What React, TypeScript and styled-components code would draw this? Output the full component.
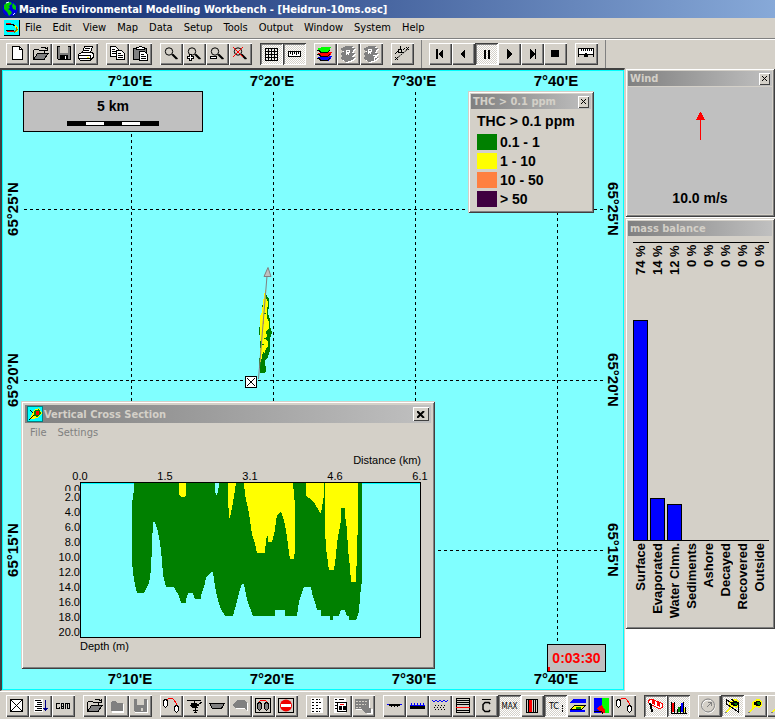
import React from "react";
import styled, { createGlobalStyle, css } from "styled-components";

const face = "#d4d0c8";
const dark = "#404040";
const mid = "#808080";
const sea = "#80ffff";
const uiFont = '"DejaVu Sans Condensed", "DejaVu Sans", sans-serif';
const plainFont = '"Liberation Sans", Arial, sans-serif';

const GlobalStyle = createGlobalStyle`
  * { box-sizing: border-box; }
  body { margin: 0; background: #fff; font-family: ${uiFont}; font-size: 11px; color: #000; }
  button { font: inherit; color: inherit; }
`;

const raised = css`
  box-shadow: inset 1px 1px 0 ${face}, inset -1px -1px 0 ${dark}, inset 2px 2px 0 #fff, inset -2px -2px 0 ${mid};
`;

const Shell = styled.div`
  display: flex;
  flex-direction: column;
  min-height: 100vh;
  overflow: hidden;
`;

const TitleBar = styled.header`
  display: flex;
  align-items: center;
  gap: 1px;
  height: 18px;
  padding-left: 2px;
  background: linear-gradient(to right, #0a246a, #87a9d8);
  color: #fff;
  font-weight: bold;
  white-space: nowrap;
`;

const MenuBar = styled.nav`
  display: flex;
  align-items: center;
  height: 21px;
  padding-left: 4px;
  background: ${face};
  border-bottom: 1px solid ${mid};
`;

const MenuItem = styled.button`
  border: 0;
  padding: 0 6px 0 5px;
  background: none;
  line-height: 16px;
`;

const ToolStrip = styled.div<{ $bottom?: boolean }>`
  display: flex;
  align-items: flex-start;
  flex: none;
  gap: 8px;
  height: ${(p) => (p.$bottom ? 28 : 29)}px;
  padding: 3px 0 0 6px;
  overflow: hidden;
  background: ${face};
  border-top: 1px solid #fff;
`;

const Group = styled.div`
  display: flex;
  flex: none;
`;

const Divider = styled.div`
  width: 1px;
  height: 29px;
  margin: -3px -1px 0;
  flex: none;
  background: ${mid};
`;

const ToolButton = styled.button<{ $on?: boolean }>`
  display: block;
  width: 23px;
  height: 22px;
  padding: 0;
  border: 0;
  flex: none;
  background: ${face};
  box-shadow: inset 1px 1px 0 #fff, inset -1px -1px 0 ${dark}, inset -2px -2px 0 ${mid};
  ${(p) =>
    p.$on &&
    css`
      background: repeating-conic-gradient(#fff 0 25%, ${face} 0 50%) 0 0 / 2px 2px;
      box-shadow: inset 1px 1px 0 ${dark}, inset -1px -1px 0 #fff, inset 2px 2px 0 ${mid};
    `}
`;

const Glyph = styled.svg.attrs({ width: 23, height: 22, viewBox: "0 0 23 22", shapeRendering: "crispEdges" })`
  display: block;
  fill: none;
  stroke: #000;
`;

const Workspace = styled.main`
  display: flex;
  flex: 1;
`;

const MapPane = styled.section`
  position: relative;
  flex: 1;
  min-width: 0;
  overflow: hidden;
  background: ${sea};
  border: solid ${face};
  border-width: 2px 1px 1px 2px;
  border-top-color: ${dark};
  border-left-color: ${dark};
  box-shadow: inset 0 0 0 1px #00ffff;
`;

const MapDrawing = styled.svg`
  display: block;
  font: bold 15px ${plainFont};
`;

const SidePane = styled.aside`
  width: 150px;
  flex: none;
  background: #fff;
`;

const Panel = styled.section`
  padding: 3px;
  background: ${face};
  ${raised}
`;

const Caption = styled.header<{ $tall?: boolean }>`
  display: flex;
  align-items: center;
  justify-content: space-between;
  height: ${(p) => (p.$tall ? 18 : 15)}px;
  padding: 0 2px;
  background: linear-gradient(to right, ${mid}, #c0c0c0);
  color: ${face};
  font-weight: bold;
  white-space: nowrap;
`;

const CaptionTitle = styled.span`
  display: flex;
  align-items: center;
  gap: 1px;
`;

const CloseButton = styled.button<{ $big?: boolean }>`
  display: flex;
  align-items: center;
  justify-content: center;
  width: ${(p) => (p.$big ? 16 : 11)}px;
  height: ${(p) => (p.$big ? 14 : 12)}px;
  padding: 0;
  border: 0;
  background: ${face};
  box-shadow: inset 1px 1px 0 #fff, inset -1px -1px 0 ${dark};
`;

const ScaleBox = styled.div`
  position: absolute;
  left: 21px;
  top: 21px;
  width: 180px;
  height: 41px;
  padding-top: 6px;
  border: 1px solid #000;
  background: #c0c0c0;
  font: bold 14px/16px ${plainFont};
  text-align: center;
`;

const ScaleBar = styled.div`
  display: flex;
  width: 92px;
  height: 5px;
  margin: 7px auto 0;
  border: 1px solid #000;
`;

const ScalePart = styled.span<{ $white?: boolean }>`
  flex: 1;
  background: ${(p) => (p.$white ? "#fff" : "#000")};
`;

const LegendWindow = styled(Panel)`
  position: absolute;
  right: 30px;
  top: 21px;
  width: 126px;
  padding-bottom: 5px;
`;

const LegendBody = styled.div`
  padding: 4px 6px 0;
  font: bold 14px/16px ${plainFont};
`;

const LegendTitle = styled.div`
  margin-bottom: 3px;
`;

const LegendRow = styled.div`
  display: flex;
  align-items: center;
  gap: 3px;
  height: 19px;
`;

const Swatch = styled.span<{ $color: string }>`
  width: 20px;
  height: 16px;
  background: ${(p) => p.$color};
`;

const Clock = styled.div`
  position: absolute;
  right: 18px;
  bottom: 18px;
  width: 59px;
  height: 28px;
  border: 1px solid #000;
  background: linear-gradient(#f00, #f00) left bottom / 2px 4px no-repeat #c0c0c0;
  color: #f00;
  font: bold 14px/26px ${plainFont};
  text-align: center;
`;

const SectionWindow = styled(Panel)`
  position: absolute;
  left: 19px;
  bottom: 21px;
  width: 414px;
  padding: 4px 4px 11px;
`;

const SectionMenu = styled.div`
  display: flex;
  height: 20px;
  color: ${mid};
`;

const SectionChart = styled.svg`
  display: block;
  font: 11px ${plainFont};
`;

const WindBody = styled.div`
  display: flex;
  flex-direction: column;
  align-items: center;
  justify-content: space-between;
  height: 127px;
  margin-top: 1px;
  padding: 25px 0 8px;
  background: #c0c0c0;
  font: bold 14px/16px ${plainFont};
`;

const MassPanel = styled(Panel)`
  margin-top: 1px;
  min-height: 411px;
`;

const MassChart = styled.div`
  display: grid;
  grid-template-columns: repeat(8, 17px);
  margin: 6px 0 0 5px;
  width: 135px;
  font: bold 13px/15px ${plainFont};
`;

const MassColumn = styled.div`
  display: flex;
  flex-direction: column;
`;

const MassPlot = styled.div`
  display: flex;
  flex-direction: column;
  justify-content: space-between;
  height: 299px;
  border-top: 1px solid #000;
  border-bottom: 1px solid #000;
`;

const Upright = styled.span`
  width: 15px;
  padding-bottom: 2px;
  writing-mode: vertical-rl;
  transform: rotate(180deg);
  white-space: nowrap;
  text-align: right;
`;

const UprightValue = styled(Upright)`
  height: 32px;
`;

const MassBar = styled.div`
  width: 15px;
  background: #00f;
  border: 1px solid #000;
  border-bottom: 0;
`;

type IconName = string;

const folderOpen = (
  <>
    <path d="M4.5 16.5v-9l1-1h4l1 1h5v3" fill={face} />
    <path d="M4.5 16.5l4-6h10.5l-4 6z" fill={mid} />
    <path d="M11.5 5.5l1-1.5h3l2 2M18.5 3.5v3.5h-3.5" />
  </>
);
const capsules = (
  <>
    <path d="M3.5 5.5l2-1 2 1v5l-2 2-2-2zM14.5 11.5l2-1 2 1v4l-2 2-2-2z" fill="#fff" />
    <path d="M7 5l2-2h3l2 2 2 3v2" stroke="#f00" />
  </>
);
const lens = (
  <>
    <circle cx="9" cy="8.5" r="3.7" shapeRendering="auto" />
    <path d="M12 11.5l4.5 4.5M13 11.5l4.5 4.5" strokeWidth="1.4" shapeRendering="auto" />
  </>
);
const sheets = (a: string, b: string, c: string) => (
  <g stroke="none">
    <path d="M3 15l5-3h9l-3 2h4l-3 3-6 2z" fill={c} />
    <path d="M3 11l5-3h9l-3 2h4l-3 3-6 2z" fill={b} />
    <path d="M3 6l6-3h7l-2 2h4l-4 4-5 1z" fill={a} />
  </g>
);
const plumeBlob = (
  <>
    <path d="M4 17l4-4v-6l2-1 2-2h3l3 2v5l-3 2-3-1-3 2-3 3z" fill="#ff0" stroke="none" />
    <path d="M10 7h2v-1h4v1h1v3h-1v1h-4v-1h-2z" fill="#000" stroke="none" />
    <path d="M13 7h3v3h-2v-1h-1z" fill="#008000" stroke="none" />
    <path d="M4 17.5h2" stroke={mid} />
  </>
);

const icons: Record<IconName, React.ReactNode> = {
  New: (
    <>
      <path d="M6.5 3.5h7l3 3v10h-10z" fill="#fff" />
      <path d="M13.5 3.5v3h3" />
    </>
  ),
  Open: folderOpen,
  Save: (
    <>
      <path d="M5.5 3.5h13v13h-12l-1-1z" fill={mid} />
      <path d="M8 3h8v7h-8z" fill={face} stroke="none" />
      <path d="M8 12h8v5h-8z" fill="#000" stroke="none" />
      <path d="M13.5 13v3" stroke="#fff" />
    </>
  ),
  Print: (
    <>
      <path d="M7.5 9.5l2-6h8l-2 6" fill="#fff" />
      <path d="M10 5.5h5M9 7.5h5" />
      <path d="M3.5 11.5l3-2h10l2 1v4l-3 3h-10l-2-2z" fill="#fff" />
      <path d="M4 12.5h12M4 15.5h11M15.5 13v4l3-3" />
      <path d="M11.5 14h2" stroke="#ff0" />
    </>
  ),
  Copy: (
    <>
      <path d="M4.5 3.5h5l3 3v7h-8z" fill="#fff" />
      <path d="M6 6.5h3M6 8.5h4M6 10.5h4" />
      <path d="M10.5 7.5h5l3 3v6h-8z" fill="#fff" />
      <path d="M12 10.5h3M12 12.5h5M12 14.5h5" />
    </>
  ),
  Paste: (
    <>
      <path d="M4.5 5.5h13v11h-13z" fill={mid} />
      <path d="M7.5 6.5v-2h2l1-1h2l1 1h2v2z" fill="#fff" />
      <path d="M10.5 8.5h5l3 3v6h-8z" fill="#fff" />
      <path d="M12 11.5h3M12 13.5h5M12 15.5h5" />
    </>
  ),
  Zoom: lens,
  "Zoom in": (
    <>
      {lens}
      <path d="M6.5 11.5h2v2h2v2h-2v2h-2v-2h-2v-2h2z" fill="#fff" />
    </>
  ),
  "Zoom out": (
    <>
      {lens}
      <path d="M4.5 13.5h6v2h-6z" fill="#fff" />
    </>
  ),
  "Zoom off": (
    <>
      {lens}
      <path d="M4 4l10 10M14 4l-10 10" stroke="#f00" />
    </>
  ),
  Grid: <path d="M5.5 5v13M8.5 5v13M11.5 5v13M14.5 5v13M17.5 5v13M5 5.5h13M5 8.5h13M5 11.5h13M5 14.5h13M5 17.5h13" />,
  Ruler: (
    <>
      <path d="M5.5 8.5h12v5h-12z" fill="#fff" />
      <path d="M7.5 9v2M9.5 9v3M11.5 9v2M13.5 9v3M15.5 9v2" />
    </>
  ),
  Layers: (
    <>
      <g stroke="none">
        <path d="M3 15l4-2h11l-2 2h2l-4 3h-7z" fill="#00f" />
        <path d="M3 11l4-2h11l-2 2h2l-4 3h-7z" fill="#f00" />
        <path d="M3 6l5-2h9l-2 2h2l-4 3h-6z" fill="#0f0" />
      </g>
      <path d="M3 7.5h2l2 2h6l3-2M3 11.5h2l2 2h6l3-2M3 15.5h2l2 2h6l3-2" />
    </>
  ),
  "Layers off": (
    <>
      <g transform="translate(1 1)">{sheets("#fff", "#fff", "#fff")}</g>
      {sheets(mid, mid, mid)}
      <path d="M9.5 7v5M10 7.5h2v2h-2l2 2" stroke="#fff" />
    </>
  ),
  "Layers query": (
    <>
      <g transform="translate(1 1)">{sheets("#fff", "#fff", "#fff")}</g>
      {sheets(mid, mid, mid)}
      <path d="M8.5 6v5M9 6.5h2v2h-2l2 2M13 12.5h3v2h-2v2" stroke="#fff" />
    </>
  ),
  Vector: (
    <>
      <path d="M5 16l12-10" strokeDasharray="2 1" shapeRendering="auto" />
      <path d="M4 11l3-3M7.5 6.5h3v3h-3zM9.5 3v3M10 9.500h3M12 7l2-2M4 14l3 3M7 14l-3 3M15 4l3 3M18 4l-3 3" />
    </>
  ),
  First: (
    <>
      <path d="M7 6h2v10h-2z" fill="#000" stroke="none" />
      <path d="M14 6v10l-5-5z" fill="#000" stroke="none" />
    </>
  ),
  Back: <path d="M13 6v10l-5-5z" fill="#000" stroke="none" />,
  Pause: <path d="M9 7h2v9h-2zM13 7h2v9h-2z" fill="#000" stroke="none" />,
  Play: <path d="M9 6v10l5-5z" fill="#000" stroke="none" />,
  Last: (
    <>
      <path d="M14 6h1v10h-1z" fill="#000" stroke="none" />
      <path d="M9 6v10l5-5z" fill="#000" stroke="none" />
    </>
  ),
  Stop: <path d="M7 7h8v7h-8z" fill="#000" stroke="none" />,
  Frame: (
    <>
      <path d="M4 6h14v5h-14z" fill="#fff" stroke="none" />
      <path d="M3.500 14v-8.500h15v8.500M4 11.500h14M6.500 6v2M8.500 6v2M10.500 6v2M12.500 6v2M14.500 6v2M16.500 6v2" />
      <path d="M10 10h2v1h1v3h-4v-3h1z" fill="#000" stroke="none" />
    </>
  ),
  Site: (
    <>
      <path d="M4.5 4.5h12v12h-12z" fill="#fff" />
      <path d="M5 5l11 11M16 5l-11 11" />
    </>
  ),
  List: (
    <>
      <path d="M5 4h9v13h-9z" fill="#fff" stroke="none" />
      <path d="M6 5.5h6M8 7.5h5M8 9.5h5M6 11.5h7M8 13.5h5M6 15.5h7" />
      <path d="M16.5 5v11M14 13.5h5M15 14.5h3" stroke="#008" />
    </>
  ),
  Goil: <path d="M8 8.500h-3l-1 1v3l1 1h2v-2M9.500 8.500h2v5h-2zM13.500 8v6M15.500 8v6M17.500 8v6M13 8.500h4M16 13.500h2M9 11.500h3" />,
  "Folder off": (
    <>
      <path d="M6 7h5l1 2h6v9h-12z" fill="#fff" stroke="none" />
      <path d="M5 8l1-2h4l1 2h6v8h-12z" fill={mid} stroke="none" />
    </>
  ),
  "Save off": (
    <>
      <path d="M6 5h13v13h-13z" fill="#fff" stroke="none" />
      <path d="M5 4h13v13h-12l-1-1z" fill={mid} stroke="none" />
      <path d="M8 4h7v6h-7zM12 13h2v3h-2z" fill={face} stroke="none" />
    </>
  ),
  Release: capsules,
  Helicopter: (
    <>
      <path d="M4 5.5h14M11.5 5v3M8 9h8l3-2M7 10.5h9M9 12.5h6M12 13v5M10 15.5h5M11 17.5h3" />
      <path d="M8 8h6v4h-6z" fill="#000" stroke="none" />
    </>
  ),
  Boom: <path d="M3.5 8.5h15l-3 5h-9z" fill={mid} />,
  Vessel: (
    <>
      <path d="M4 11l5-5h7l3 3v8l-3-3h-8z" fill="#fff" stroke="none" />
      <path d="M3 10l5-5h7l3 3v8l-3-3h-8z" fill={mid} stroke="none" />
    </>
  ),
  Responses: (
    <>
      <path d="M3.5 3.5h15v14h-15z" />
      <path d="M5.500 8.500l2-1 2 1v5l-2 2-2-2zM12.500 8.500l2-1 2 1v5l-2 2-2-2z" fill={mid} />
      <path d="M7 6.500l2-1h4l2 1" stroke="#f00" />
    </>
  ),
  "No entry": (
    <>
      <path d="M3.5 3.5h15v14h-15z" />
      <circle cx="11" cy="10.500" r="6" fill="#e00" stroke="none" shapeRendering="auto" />
      <path d="M6 9h10v3h-10z" fill="#fff" stroke="none" />
    </>
  ),
  Report: (
    <>
      <path d="M5 3h12v15h-12z" fill="#fff" stroke="none" />
      <path d="M6 4.5h2M6 7.500h2M6 10.500h2M6 13.500h2M6 16.500h2" />
      <path d="M10 4.500h4M10 7.500h5M10 10.500h3M10 13.500h5M10 16.500h4" strokeDasharray="2 1" />
    </>
  ),
  "Response report": (
    <>
      <path d="M5 3h12v15h-12z" fill="#fff" stroke="none" />
      <path d="M6 4.500h2M6 7.500h2M6 10.500h2M6 13.500h2M10 4.500h5" />
      <path d="M8.500 7.500h9v9h-9z" fill="#fff" />
      <path d="M10 11h3v4h-3zM14 11h3v4h-3z" fill="#000" stroke="none" />
      <path d="M11 9.500h4" stroke="#f00" />
    </>
  ),
  "Keyboard off": (
    <>
      <path d="M4 5h14v9h3v5h-6l-3-4h-8z" fill="#fff" stroke="none" />
      <path d="M3 4h14v9h2v5h-6l-3-4h-7z" fill={mid} stroke="none" />
      <path d="M4 6.500h12M4 9.500h10M4 12.500h5" stroke={face} strokeDasharray="2 1" />
    </>
  ),
  "Surface film": (
    <>
      <path d="M4 9.500h15" stroke="#00f" />
      <path d="M6 9h11v2h-2v1h-1v-1h-2v1h-1v-1h-2v1h-1v-1h-2z" fill="#000" stroke="none" />
    </>
  ),
  "Surface depth": (
    <>
      <path d="M4 10.500h15M5.500 8v2M8.500 8v2M11.500 8v2M14.500 8v2M17.500 8v2" stroke="#00f" />
      <path d="M4 11h15v3h-15z" fill="#000" stroke="none" />
    </>
  ),
  "Water column": (
    <>
      <path d="M3 5l2 2 2-2 2 2 2-2 2 2 2-2 2 2 2-2" stroke="#00f" />
      <path d="M6 10.500h12M5 12.500h12M6 14.500h12" strokeDasharray="1 2" />
    </>
  ),
  Profile: (
    <>
      <path d="M4.500 3.500h13v14h-13zM5 5.500h12M5 7.500h12M5 9.500h12M5 15.500h12" />
      <path d="M4 12.500h14" stroke="#f00" />
    </>
  ),
  "Mean concentration": (
    <>
      <path d="M7 4.500h9" />
      <path d="M15 9l-1-1.500h-4l-2 2v5l2 2h4l1-1.500" shapeRendering="auto" strokeWidth="1.500" />
    </>
  ),
  Maximum: (
    <text x="11.500" y="14" fontSize="8" textAnchor="middle" stroke="none" fill="#000">
      MAX
    </text>
  ),
  Bands: (
    <>
      <path d="M5.500 4.500h11v13h-11zM7.500 5v12M12.500 5v12M14.500 5v12" />
      <path d="M8 5h3v12h-3z" fill="#f00" stroke="none" />
    </>
  ),
  "Total concentration": (
    <>
      <text x="10" y="14" fontSize="9" textAnchor="middle" stroke="none" fill="#000">
        TC
      </text>
      <path d="M18.500 10v2M18.500 13v1M18.500 15v2" />
    </>
  ),
  "Layer view": (
    <>
      <path d="M3 8l3-4h13v4z" fill="#00f" stroke="none" />
      <path d="M3.500 14.500l4-4h11l-4 4z" fill="#ff0" />
      <path d="M3 17h15v-2h-15z" fill="#00f" stroke="none" />
      <path d="M9 12h4v1h-4" fill="#0a0" stroke="#080" />
    </>
  ),
  "Section view": (
    <>
      <path d="M4 3h15v15h-15z" fill="#00f" stroke="none" />
      <path d="M12 3h7v15h-4l-3-7z" fill="#0f0" stroke="none" />
      <path d="M7 13l5-3 3 5v3h-4z" fill="#f00" stroke="none" />
      <path d="M4 16h5l3 1v2" />
    </>
  ),
  Recovery: capsules,
  Wind: (
    <>
      <path d="M4.500 5.500l2-1h2l10 4v4l-3 1-9-4-2-2z" fill="#fff" stroke="#f00" />
      <path d="M8 5l3 1v4l-3-1zM13 7l3 1v4l-3-1z" fill="#f00" stroke="none" />
      <path d="M6 8l1 3 1 6" strokeWidth="2" />
    </>
  ),
  "Mass balance": (
    <>
      <path d="M4.500 7v11h15" />
      <path d="M5 8h2v9h-2z" fill="#f00" stroke="none" />
      <path d="M7.500 7v11M10.500 14v4M13.500 11v7M16.500 7v11M18.500 12v6" />
      <path d="M8 15h2v2h-2z" fill={face} stroke="none" />
      <path d="M11 12h2v5h-2z" fill="#080" stroke="none" />
      <path d="M14 8h2v9h-2z" fill="#00f" stroke="none" />
      <path d="M17 13h1v4h-1z" fill="#ff0" stroke="none" />
    </>
  ),
  "Direction off": (
    <>
      <circle cx="10.500" cy="11.500" r="6.500" stroke="#fff" shapeRendering="auto" />
      <circle cx="10" cy="10.500" r="6.500" stroke={mid} shapeRendering="auto" />
      <path d="M9 12l4-4M10 7.500h3v3" stroke={mid} />
    </>
  ),
  "Plume grid": (
    <>
      {plumeBlob}
      <path d="M5 4.500l5 3h8M5.500 5v4l12 8v-10M10 4l8 5" />
    </>
  ),
  Plume: plumeBlob,
  "Plume track": plumeBlob,
};

type Tool = [IconName, boolean?];
const topGroups: Tool[][] = [
  [["New"], ["Open"], ["Save"], ["Print"]],
  [["Copy"], ["Paste"]],
  [["Zoom"], ["Zoom in"], ["Zoom out"], ["Zoom off"]],
  [["Grid", true], ["Ruler", true]],
  [["Layers"], ["Layers off"], ["Layers query"]],
  [["Vector"]],
];
const playerGroups: Tool[][] = [
  [["First"], ["Back"], ["Pause", true], ["Play"], ["Last"], ["Stop"]],
  [["Frame"]],
];
const bottomGroups: Tool[][] = [
  [["Site"], ["List"], ["Goil"]],
  [["Open"], ["Folder off"], ["Save off"]],
  [["Release"], ["Helicopter"], ["Boom"], ["Vessel"], ["Responses"], ["No entry"]],
  [["Report"], ["Response report"], ["Keyboard off"]],
  [
    ["Surface film"],
    ["Surface depth"],
    ["Water column"],
    ["Profile"],
    ["Mean concentration"],
    ["Maximum", true],
    ["Bands"],
    ["Total concentration", true],
    ["Layer view"],
    ["Section view"],
    ["Recovery"],
  ],
  [["Wind", true], ["Mass balance", true]],
  [["Direction off"], ["Plume grid", true], ["Plume"], ["Plume track"]],
];

function Groups({ groups }: { groups: Tool[][] }) {
  return (
    <>
      {groups.map((tools, i) => (
        <Group key={i}>
          {tools.map(([name, on]) => (
            <ToolButton key={name} type="button" aria-label={name} aria-pressed={on} $on={on}>
              <Glyph aria-hidden="true">{icons[name]}</Glyph>
            </ToolButton>
          ))}
        </Group>
      ))}
    </>
  );
}

function Close({ big }: { big?: boolean }) {
  return (
    <CloseButton type="button" aria-label="Close" $big={big}>
      <svg width="8" height="7" viewBox="0 0 8 7" stroke="#000" strokeWidth={big ? 2 : 1} aria-hidden="true">
        <path d={big ? "M0 0l7 7M7 0l-7 7" : "M1 1l5 5M6 1l-5 5"} />
      </svg>
    </CloseButton>
  );
}

const meridians = [
  { x: 131, label: "7°10'E" },
  { x: 273, label: "7°20'E" },
  { x: 415, label: "7°30'E" },
  { x: 557, label: "7°40'E" },
];
const parallels = [
  { y: 209, label: "65°25'N" },
  { y: 380, label: "65°20'N" },
  { y: 550, label: "65°15'N" },
];

function ChartMap() {
  return (
    <MapDrawing width="622" height="620" viewBox="2 70 622 620" role="img" aria-label="Map">
      <g stroke="#000" strokeDasharray="3 3" shapeRendering="crispEdges">
        {meridians.map((m) => (
          <path key={m.x} d={`M${m.x}.5 92V665`} />
        ))}
        {parallels.map((p) => (
          <path key={p.y} d={`M24 ${p.y}.5H604`} />
        ))}
      </g>
      <g textAnchor="middle">
        {meridians.map((m) => (
          <React.Fragment key={m.x}>
            <text x={m.x - 1} y="86">{m.label}</text>
            <text x={m.x - 1} y="684">{m.label}</text>
          </React.Fragment>
        ))}
        {parallels.map((p) => (
          <React.Fragment key={p.y}>
            <text transform={`translate(18 ${p.y}) rotate(-90)`}>{p.label}</text>
            <text transform={`translate(608 ${p.y}) rotate(90)`}>{p.label}</text>
          </React.Fragment>
        ))}
      </g>
      <g shapeRendering="crispEdges">
        <path
          fill="#008000"
          d="M260 373l-1-10 1-10v-13l-1-10 2-10 1-12 2-10 1-10 2 9 2 2v6l-1 8 2 6v8l2 5-2 7v12l-2 6-3 4 1 10-2 2z"
        />
        <path
          fill="#ff0"
          d="M260 334v-18l2-4 1-10 2-12 1 0v8l2 4v4l-1 2v10l2 4v6l-3 4 1 4-1 3 2 3v4l-2 2-1 5-2-1-2 10h-1v-12l1-3z"
        />
        <path d="M264 313h2M266 332h2M262 344h2M264 338h2" stroke="#008000" />
        <path d="M263 321v3" stroke="#ff8040" />
      </g>
      <path d="M258.500 379L267 276" stroke={mid} fill="none" />
      <path d="M268 267.500l-4 9h7z" fill="#c0c0c0" stroke={mid} />
      <g shapeRendering="crispEdges">
        <path d="M245.500 376.500h11v11h-11z" fill="#fff" stroke="#000" />
        <path d="M247 378l8 8M255 378l-8 8" stroke="#000" />
      </g>
    </MapDrawing>
  );
}

function CrossSection() {
  return (
    <SectionWindow>
      <Caption $tall>
        <CaptionTitle>
          <svg width="16" height="16" viewBox="0 0 16 16" shapeRendering="crispEdges" aria-hidden="true">
            <path d="M.5.5h15v15h-15z" fill="#0ff" stroke="#008080" />
            <path d="M3 12l4-8 5-2 3 5-4 5-6 1z" fill="#ff0" />
            <path d="M7 5l5-2 2 4-4 4-3-1z" fill="#008000" />
            <path d="M9 5h3v4h-3z" fill="#f00" />
            <path d="M2 14l5-5M3 4l3 3" stroke="#000" />
          </svg>
          Vertical Cross Section
        </CaptionTitle>
        <Close big />
      </Caption>
      <SectionMenu>
        <MenuItem type="button">File</MenuItem>
        <MenuItem type="button">Settings</MenuItem>
      </SectionMenu>
      <SectionChart width="406" height="215" viewBox="25 443 406 215" role="img" aria-label="Depth by distance">
        <text x="421" y="464" textAnchor="end">Distance (km)</text>
        {["0.0", "1.5", "3.1", "4.6", "6.1"].map((t, i) => (
          <text key={t} x={80 + i * 85} y="480" textAnchor="middle">{t}</text>
        ))}
        <text x="80" y="493" textAnchor="end">0.0</text>
        <path d="M60 491h20v10h-20z" fill={face} />
        {Array.from({ length: 10 }, (_, i) => (
          <text key={i} x="80" y={501 + i * 15} textAnchor="end">
            {(i * 2 + 2).toFixed(1)}
          </text>
        ))}
        <text x="80" y="650">Depth (m)</text>
        <g shapeRendering="crispEdges">
          <path d="M80.500 482.500h340v155h-340z" fill={sea} stroke="#000" />
          <path
            fill="#008000"
            d="M134 483V490L132 503V562L134 580L137 593H144L149 583L151 570L152 545L153 522H155L158 532L160 543L162 560L163 575L166 587H174L179 596L181 603H186V600L188 593H193L195 599H201V595L204 587L206 578L208 575L211 572H213L215 587L218 600L221 609L225 616H233L236 605L239 593L242 584H244L247 600L250 608L253 616H275V610H285V616H297L299 602L302 592L304 587H311L313 597L316 605L317 610H321V616H330V620H333V616H339L341 610H345L347 616H349V620H356L359 612L360 596L362 580V483Z"
          />
          <path
            fill="#ff0"
            d="M179 483V495L182 497H184L186 495V483ZM228 483V498L229 518H230L232 508L235 490L236 483ZM244 483L245 495L248 508L250 520L252 535L255 543L257 553H265L266 540L267 536H268V542H272L275 530L276 520L278 514L281 511L284 520L286 530L288 545L290 559H294L295 550V505L293 483ZM306 483V496L311 499L315 504L319 511L321 514L322 507L324 495V483ZM325 483V530L326 548L328 563L329 570H334L336 555L337 543L341 520V508H345V515L347 530L348 550L350 567L351 582H356L357 550L358 520V483Z"
          />
          <path fill={sea} d="M215 483V491L216 495H217L219 486V483Z" />
          <path d="M81 483.500H134M362 483.500H420" stroke="#0ff" />
        </g>
      </SectionChart>
    </SectionWindow>
  );
}

const legend = [
  { color: "#008000", label: "0.1 - 1" },
  { color: "#ffff00", label: "1 - 10" },
  { color: "#ff8040", label: "10 - 50" },
  { color: "#400040", label: "> 50" },
];
const masses = [
  { label: "Surface", value: 74 },
  { label: "Evaporated", value: 14 },
  { label: "Water Clmn.", value: 12 },
  { label: "Sediments", value: 0 },
  { label: "Ashore", value: 0 },
  { label: "Decayed", value: 0 },
  { label: "Recovered", value: 0 },
  { label: "Outside", value: 0 },
];
const menus = ["File", "Edit", "View", "Map", "Data", "Setup", "Tools", "Output", "Window", "System", "Help"];

export default function App() {
  return (
    <Shell>
      <GlobalStyle />
      <TitleBar>
        <svg width="16" height="16" viewBox="0 0 16 16" aria-hidden="true">
          <circle cx="8" cy="8" r="7.500" fill="#0000e0" />
          <path d="M2 4l3-3 4 0 1 2-3 2 1 2-2 1 3 2 1 2-3 3-2-4-3-3zM11 2l3 3v4l-3-1-1-3z" fill="#0c0" />
          <path d="M4 2l3-1M13 12l-2 2" stroke="#dff" />
        </svg>
        Marine Environmental Modelling Workbench - [Heidrun-10ms.osc]
      </TitleBar>
      <MenuBar>
        <svg width="16" height="16" viewBox="0 0 16 16" shapeRendering="crispEdges" aria-hidden="true">
          <path d="M0 0h16v16h-16z" fill="#0ff" />
          <path d="M0 15.500h16M15.500 0v16" stroke="#000" />
          <path d="M2 4.500h6l3 1M2 10.500h8" stroke="#000" fill="none" />
          <path d="M2 3.500h5M3 11.500h8l2-1" stroke="#f00" fill="none" />
          <path d="M11 5l3 2v4l-4 2 2-3z" fill="#ff0" />
          <path d="M12 7.500l1 2-3 3" stroke="#808000" fill="none" />
        </svg>
        {menus.map((m) => (
          <MenuItem key={m} type="button">{m}</MenuItem>
        ))}
      </MenuBar>
      <ToolStrip role="toolbar" aria-label="Standard">
        <Groups groups={topGroups} />
        <Divider />
        <Groups groups={playerGroups} />
        <Divider />
      </ToolStrip>
      <Workspace>
        <MapPane>
          <ChartMap />
          <ScaleBox>
            5 km
            <ScaleBar>
              <ScalePart />
              <ScalePart $white />
              <ScalePart />
              <ScalePart $white />
              <ScalePart />
            </ScaleBar>
          </ScaleBox>
          <LegendWindow>
            <Caption>
              THC &gt; 0.1 ppm
              <Close />
            </Caption>
            <LegendBody>
              <LegendTitle>THC &gt; 0.1 ppm</LegendTitle>
              {legend.map((l) => (
                <LegendRow key={l.label}>
                  <Swatch $color={l.color} />
                  {l.label}
                </LegendRow>
              ))}
            </LegendBody>
          </LegendWindow>
          <Clock>0:03:30</Clock>
          <CrossSection />
        </MapPane>
        <SidePane>
          <Panel>
            <Caption>
              Wind
              <Close />
            </Caption>
            <WindBody>
              <svg width="11" height="28" viewBox="0 0 11 28" shapeRendering="crispEdges" aria-hidden="true">
                <path d="M5 0h1l4 8h-9z" fill="#f00" />
                <path d="M5.500 1v27" stroke="#f00" />
              </svg>
              10.0 m/s
            </WindBody>
          </Panel>
          <MassPanel>
            <Caption>mass balance</Caption>
            <MassChart>
              {masses.map((m) => (
                <MassColumn key={m.label}>
                  <MassPlot>
                    <UprightValue>{m.value} %</UprightValue>
                    {m.value > 0 && <MassBar style={{ height: `${m.value}%` }} />}
                  </MassPlot>
                  <Upright>{m.label}</Upright>
                </MassColumn>
              ))}
            </MassChart>
          </MassPanel>
        </SidePane>
      </Workspace>
      <ToolStrip $bottom role="toolbar" aria-label="Simulation">
        <Groups groups={bottomGroups} />
      </ToolStrip>
    </Shell>
  );
}
